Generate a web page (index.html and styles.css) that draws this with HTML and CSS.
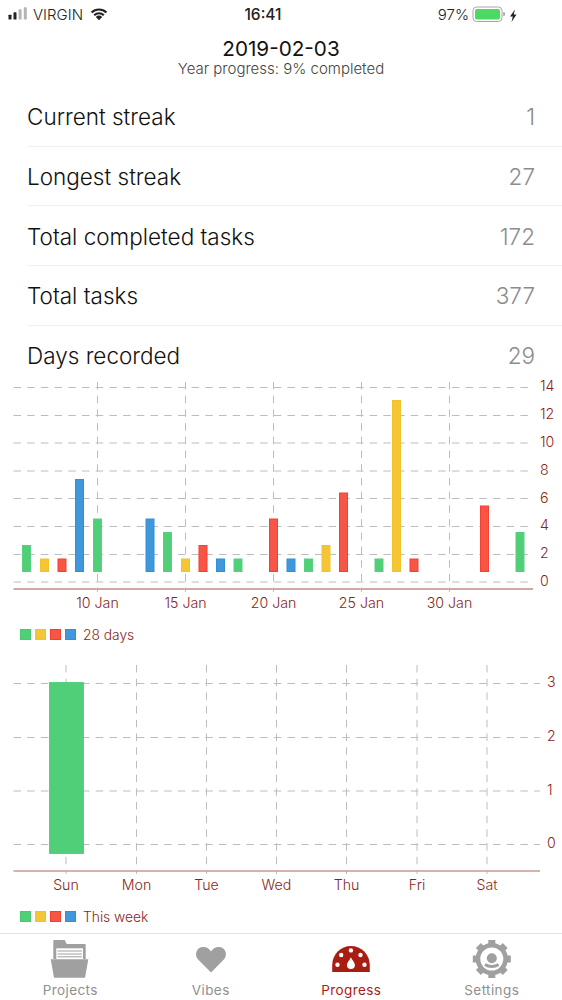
FILE: index.html
```html
<!DOCTYPE html>
<html>
<head>
<meta charset="utf-8">
<title>Progress</title>
<link rel="stylesheet" href="styles.css">
</head>
<body>
<div id="app">
    <div class="status">
        <div class="status-left">
            <svg class="signal" width="20" height="14" viewBox="8 7 20 14">
                <rect class="on" x="8.5" y="14.7" width="3" height="4.8" rx=".6"/>
                <rect class="on" x="13.5" y="12.3" width="3" height="7.2" rx=".6"/>
                <rect class="off" x="18.6" y="9.3" width="3" height="10.2" rx=".6"/>
                <rect class="off" x="23.8" y="7.3" width="3" height="12.2" rx=".6"/>
            </svg>
            <span class="carrier">VIRGIN</span>
            <svg class="wifi" width="18" height="13" viewBox="90 8 18 13">
                <path class="wifi-arc" d="M91.6 12.4a10.7 10.7 0 0 1 14.8 0"/>
                <path class="wifi-arc" d="M94.2 15.2a7 7 0 0 1 9.6 0"/>
                <path class="wifi-dot" d="M99 20.2l-3.2-3.3a4.6 4.6 0 0 1 6.4 0z"/>
            </svg>
        </div>
        <div class="status-time">16:41</div>
        <div class="status-right">
            <span class="percent">97%</span>
            <svg class="battery" width="45" height="16" viewBox="472 5 45 16">
                <rect class="batt-case" x="473" y="6" width="29" height="14.5" rx="3.6"/>
                <rect class="batt-fill" x="475" y="8" width="25" height="10.5" rx="1.8"/>
                <path class="batt-nub" d="M503.2 11h.6a1.2 1.2 0 0 1 1.2 1.2v1.6a1.2 1.2 0 0 1-1.2 1.2h-.6z"/>
                <path class="batt-bolt" d="M515 8.5l-5 7h2.8l-1.3 5.5 5-7.4h-2.8z"/>
            </svg>
        </div>
    </div>

    <div class="head">
        <div class="head-date">2019-02-03</div>
        <div class="head-sub">Year progress: 9% completed</div>
    </div>

    <div class="stats">
        <div class="stat"><span>Current streak</span><span class="stat-val">1</span></div>
        <div class="stat"><span>Longest streak</span><span class="stat-val">27</span></div>
        <div class="stat"><span>Total completed tasks</span><span class="stat-val">172</span></div>
        <div class="stat"><span>Total tasks</span><span class="stat-val">377</span></div>
        <div class="stat"><span>Days recorded</span><span class="stat-val">29</span></div>
    </div>

    <!-- 28 days chart, viewBox keeps the numbers in screen coordinates -->
    <svg class="chart" width="562" height="240" viewBox="0 378 562 240">
        <g class="grid">
            <line x1="13.5" x2="533" y1="387.5" y2="387.5"/>
            <line x1="13.5" x2="533" y1="415.5" y2="415.5"/>
            <line x1="13.5" x2="533" y1="443" y2="443"/>
            <line x1="13.5" x2="533" y1="471" y2="471"/>
            <line x1="13.5" x2="533" y1="498.5" y2="498.5"/>
            <line x1="13.5" x2="533" y1="526.5" y2="526.5"/>
            <line x1="13.5" x2="533" y1="554.5" y2="554.5"/>
            <line x1="13.5" x2="533" y1="582" y2="582"/>
            <line x1="97.5" x2="97.5" y1="382" y2="592"/>
            <line x1="185.5" x2="185.5" y1="382" y2="592"/>
            <line x1="273.5" x2="273.5" y1="382" y2="592"/>
            <line x1="361.5" x2="361.5" y1="382" y2="592"/>
            <line x1="449.5" x2="449.5" y1="382" y2="592"/>
        </g>
        <line class="axis" x1="13.5" x2="533" y1="589" y2="589"/>
        <g class="bars">
            <rect class="green" x="22.5" y="545.5" width="8" height="26"/>
            <rect class="yellow" x="40.5" y="559" width="8" height="12.5"/>
            <rect class="red" x="58" y="559" width="8" height="12.5"/>
            <rect class="blue" x="75.5" y="479.5" width="8" height="92"/>
            <rect class="green" x="93.5" y="519" width="8" height="52.5"/>
            <rect class="blue" x="146" y="519" width="8" height="52.5"/>
            <rect class="green" x="163.5" y="532.5" width="8" height="39"/>
            <rect class="yellow" x="181.5" y="559" width="8" height="12.5"/>
            <rect class="red" x="199" y="545.5" width="8" height="26"/>
            <rect class="blue" x="216.5" y="559" width="8" height="12.5"/>
            <rect class="green" x="234" y="559" width="8" height="12.5"/>
            <rect class="red" x="269.5" y="519" width="8" height="52.5"/>
            <rect class="blue" x="287" y="559" width="8" height="12.5"/>
            <rect class="green" x="304.5" y="559" width="8" height="12.5"/>
            <rect class="yellow" x="322" y="545.5" width="8" height="26"/>
            <rect class="red" x="339.5" y="493" width="8" height="78.5"/>
            <rect class="green" x="375" y="559" width="8" height="12.5"/>
            <rect class="yellow" x="392.5" y="400.5" width="8" height="171"/>
            <rect class="red" x="410" y="559" width="8" height="12.5"/>
            <rect class="red" x="480.5" y="506" width="8" height="65.5"/>
            <rect class="green" x="516" y="532.5" width="8" height="39"/>
        </g>
        <g class="lbl">
            <text x="540" y="391">14</text>
            <text x="540" y="419">12</text>
            <text x="540" y="447">10</text>
            <text x="540" y="475">8</text>
            <text x="540" y="503">6</text>
            <text x="540" y="530">4</text>
            <text x="540" y="558">2</text>
            <text x="540" y="586">0</text>
        </g>
        <g class="lbl mid">
            <text x="97.5" y="608">10 Jan</text>
            <text x="185.5" y="608">15 Jan</text>
            <text x="273.5" y="608">20 Jan</text>
            <text x="361.5" y="608">25 Jan</text>
            <text x="449.5" y="608">30 Jan</text>
        </g>
    </svg>
    <div class="legend legend-month">
        <i class="swatch sw-green"></i><i class="swatch sw-yellow"></i><i class="swatch sw-red"></i><i class="swatch sw-blue"></i>
        <span class="legend-text">28 days</span>
    </div>

    <!-- this week chart -->
    <svg class="chart" width="562" height="251" viewBox="0 650 562 251">
        <g class="grid">
            <line x1="13.5" x2="540" y1="683.5" y2="683.5"/>
            <line x1="13.5" x2="540" y1="737.5" y2="737.5"/>
            <line x1="13.5" x2="540" y1="791" y2="791"/>
            <line x1="13.5" x2="540" y1="844.5" y2="844.5"/>
            <line x1="66" x2="66" y1="665" y2="874"/>
            <line x1="136.5" x2="136.5" y1="665" y2="874"/>
            <line x1="206.5" x2="206.5" y1="665" y2="874"/>
            <line x1="276.5" x2="276.5" y1="665" y2="874"/>
            <line x1="346.5" x2="346.5" y1="665" y2="874"/>
            <line x1="417" x2="417" y1="665" y2="874"/>
            <line x1="487" x2="487" y1="665" y2="874"/>
        </g>
        <line class="axis thin" x1="13.5" x2="540" y1="871" y2="871"/>
        <g class="bars">
            <rect class="green" x="49.5" y="682.5" width="34" height="171"/>
        </g>
        <g class="lbl">
            <text x="547" y="687">3</text>
            <text x="547" y="741">2</text>
            <text x="547" y="795">1</text>
            <text x="547" y="848">0</text>
        </g>
        <g class="lbl mid">
            <text x="66" y="890">Sun</text>
            <text x="136.5" y="890">Mon</text>
            <text x="206.5" y="890">Tue</text>
            <text x="276.5" y="890">Wed</text>
            <text x="346.5" y="890">Thu</text>
            <text x="417" y="890">Fri</text>
            <text x="487" y="890">Sat</text>
        </g>
    </svg>
    <div class="legend legend-week">
        <i class="swatch sw-green"></i><i class="swatch sw-yellow"></i><i class="swatch sw-red"></i><i class="swatch sw-blue"></i>
        <span class="legend-text">This week</span>
    </div>

    <div class="tabbar">
        <div class="tab">
            <svg width="42" height="40" viewBox="50 939 42 40">
                <path class="tab-fill" d="M54.3 959v-18a1 1 0 0 1 1-1h10.4l2 4h18a1 1 0 0 1 1 1v14z"/>
                <rect class="tab-paper" x="57.3" y="948.3" width="26.7" height="11"/>
                <path class="tab-rule" d="M58.5 951h24.5M58.5 954h24.5M58.5 956.8h24.5"/>
                <path class="tab-fill" d="M51.7 959.3h37.6l-3.3 18.4h-31z"/>
            </svg>
            <span>Projects</span>
        </div>
        <div class="tab">
            <svg width="42" height="40" viewBox="190 939 42 40">
                <path class="tab-fill" d="M211 972.4l-12.6-12.6c-4.6-4.8-2.2-12.9 5-12.9 3.4 0 6 1.8 7.6 4.6 1.6-2.8 4.2-4.6 7.6-4.6 7.2 0 9.6 8.1 5 12.9z"/>
            </svg>
            <span>Vibes</span>
        </div>
        <div class="tab tab-on">
            <svg width="42" height="40" viewBox="330.5 939 42 40">
                <path class="gauge" d="M332.7 972v-7a18.8 19 0 0 1 37.6 0v7z"/>
                <g class="gauge-mark">
                    <circle cx="338" cy="964.7" r="2.2"/>
                    <circle cx="365" cy="964.7" r="2.2"/>
                    <circle cx="341.7" cy="955" r="2.2"/>
                    <circle cx="361" cy="955" r="2.2"/>
                    <circle cx="351.4" cy="950.4" r="2.2"/>
                    <path d="M351.4 957.3c1.3 3 4 5.3 4 7.8a4 4 0 0 1-8 0c0-2.5 2.7-4.8 4-7.8z"/>
                </g>
            </svg>
            <span>Progress</span>
        </div>
        <div class="tab">
            <svg width="42" height="40" viewBox="471 939 42 40">
                <g class="tab-fill">
                    <rect x="488.3" y="940" width="7" height="6"/>
                    <rect x="488.3" y="940" width="7" height="6" transform="rotate(45 491.8 959)"/>
                    <rect x="488.3" y="940" width="7" height="6" transform="rotate(90 491.8 959)"/>
                    <rect x="488.3" y="940" width="7" height="6" transform="rotate(135 491.8 959)"/>
                    <rect x="488.3" y="940" width="7" height="6" transform="rotate(180 491.8 959)"/>
                    <rect x="488.3" y="940" width="7" height="6" transform="rotate(225 491.8 959)"/>
                    <rect x="488.3" y="940" width="7" height="6" transform="rotate(270 491.8 959)"/>
                    <rect x="488.3" y="940" width="7" height="6" transform="rotate(315 491.8 959)"/>
                    <circle cx="491.8" cy="958.3" r="5"/>
                </g>
                <circle class="gear-ring" cx="491.8" cy="959" r="13.8"/>
                <path class="gear-smile" d="M485 964.5c3.8 2.7 9.8 2.7 13.6 0"/>
            </svg>
            <span>Settings</span>
        </div>
    </div>
</div>
</body>
</html>
```

FILE: styles.css
```css
html, body {
    margin: 0;
    padding: 0;
    background: #fff;
}
* {
    font-family: Inter, "Noto Sans", "Liberation Sans", sans-serif;
}
#app {
    width: 562px;
    height: 1000px;
    overflow: hidden;
    display: flex;
    flex-direction: column;
}

/* status bar */
.status {
    height: 29px;
    flex: none;
    box-sizing: border-box;
    padding: 0 0 1px 8px;
    display: grid;
    grid-template-columns: 216px 78px 1fr;
    align-items: center;
    color: #222;
    font-size: 15px;
}
.status-left, .status-right {
    display: flex;
    align-items: center;
}
.status-time {
    text-align: center;
    font-size: 15.5px;
    font-weight: 500;
}
.status-right {
    justify-content: flex-end;
    padding-right: 45px;
}
.carrier {
    margin-left: 5px;
    font-weight: 300;
}
.wifi {
    margin-left: 7px;
}
.percent {
    font-weight: 300;
    margin-right: 3px;
}
.signal .on { fill: #222; }
.signal .off { fill: #b5b5b5; }
.wifi-arc {
    fill: none;
    stroke: #222;
    stroke-width: 2.1;
}
.wifi-dot { fill: #222; }
.batt-case {
    fill: none;
    stroke: #a8a8a8;
}
.batt-fill { fill: #4cd964; }
.batt-nub { fill: #a8a8a8; }
.batt-bolt { fill: #222; }

/* date heading */
.head {
    height: 58px;
    flex: none;
    text-align: center;
}
.head-date {
    font-size: 20.7px;
    line-height: 22px;
    margin-top: 9px;
    color: #111;
}
.head-sub {
    font-size: 15px;
    line-height: 18px;
    font-weight: 300;
    color: #444;
}

/* numbers list */
.stats {
    height: 291px;
    flex: none;
    overflow: hidden;
    margin-left: 27px;
}
.stat {
    height: 59.7px;
    box-sizing: border-box;
    padding: 1px 27px 0 0;
    display: flex;
    justify-content: space-between;
    align-items: center;
    border-bottom: 1px solid #f1f1f1;
    font-size: 22.5px;
    font-weight: 300;
    color: #111;
}
.stat-val {
    color: #8c8c8c;
}

/* charts */
.chart {
    display: block;
    flex: none;
}
.grid line {
    stroke: #bdbdbd;
    stroke-width: 1;
    stroke-dasharray: 7.5 6.2;
}
.axis {
    stroke: #cfa9a6;
    stroke-width: 2;
}
.axis.thin {
    stroke: #c99a96;
    stroke-width: 1.5;
}
.bars rect { stroke-width: 1; }
.green { fill: #50cf78; stroke: #58d17f; }
.yellow { fill: #f4c534; stroke: #f3c22a; }
.red { fill: #f95546; stroke: #f5402f; }
.blue { fill: #3f98dc; stroke: #308fd8; }
.lbl text {
    font-size: 14.2px;
    font-weight: 300;
    fill: #8a1f17;
}
.mid text {
    text-anchor: middle;
}

/* legends */
.legend {
    flex: none;
    display: flex;
    align-items: center;
    box-sizing: border-box;
    padding-left: 20px;
    height: 32px;
}
.legend-month {
    padding-top: 1px;
}
.legend-week {
    padding-bottom: 1px;
}
.swatch {
    display: block;
    width: 11px;
    height: 11px;
    box-sizing: border-box;
    margin-right: 4px;
    border: 1px solid;
}
.sw-green { background: #50cf78; border-color: #46cc70; }
.sw-yellow { background: #f4c534; border-color: #f3c22a; }
.sw-red { background: #f95546; border-color: #f5402f; }
.sw-blue { background: #3f98dc; border-color: #308fd8; }
.legend-text {
    margin-left: 3px;
    font-size: 13.8px;
    font-weight: 300;
    color: #8a1f17;
}

/* tab bar */
.tabbar {
    flex: none;
    height: 67px;
    box-sizing: border-box;
    border-top: 1px solid #e3e3e3;
    display: grid;
    grid-template-columns: 140.5px 140.5px 140.5px 140.5px;
}
.tab {
    display: flex;
    flex-direction: column;
    align-items: center;
    padding-top: 5px;
    font-size: 13.5px;
    font-weight: 400;
    letter-spacing: .4px;
    color: #8f8f8f;
}
.tab svg {
    display: block;
}
.tab span {
    line-height: 16px;
    margin-top: 3px;
}
.tab-on {
    color: #a91c12;
}
.tab-fill { fill: #a0a0a0; }
.tab-paper { fill: #fff; }
.tab-rule {
    stroke: #a0a0a0;
    stroke-width: 1;
    fill: none;
}
.gauge { fill: #a91c12; }
.gauge-mark { fill: #fff; }
.gear-ring {
    fill: none;
    stroke: #a0a0a0;
    stroke-width: 4.6;
}
.gear-smile {
    fill: none;
    stroke: #a0a0a0;
    stroke-width: 3;
}
```
